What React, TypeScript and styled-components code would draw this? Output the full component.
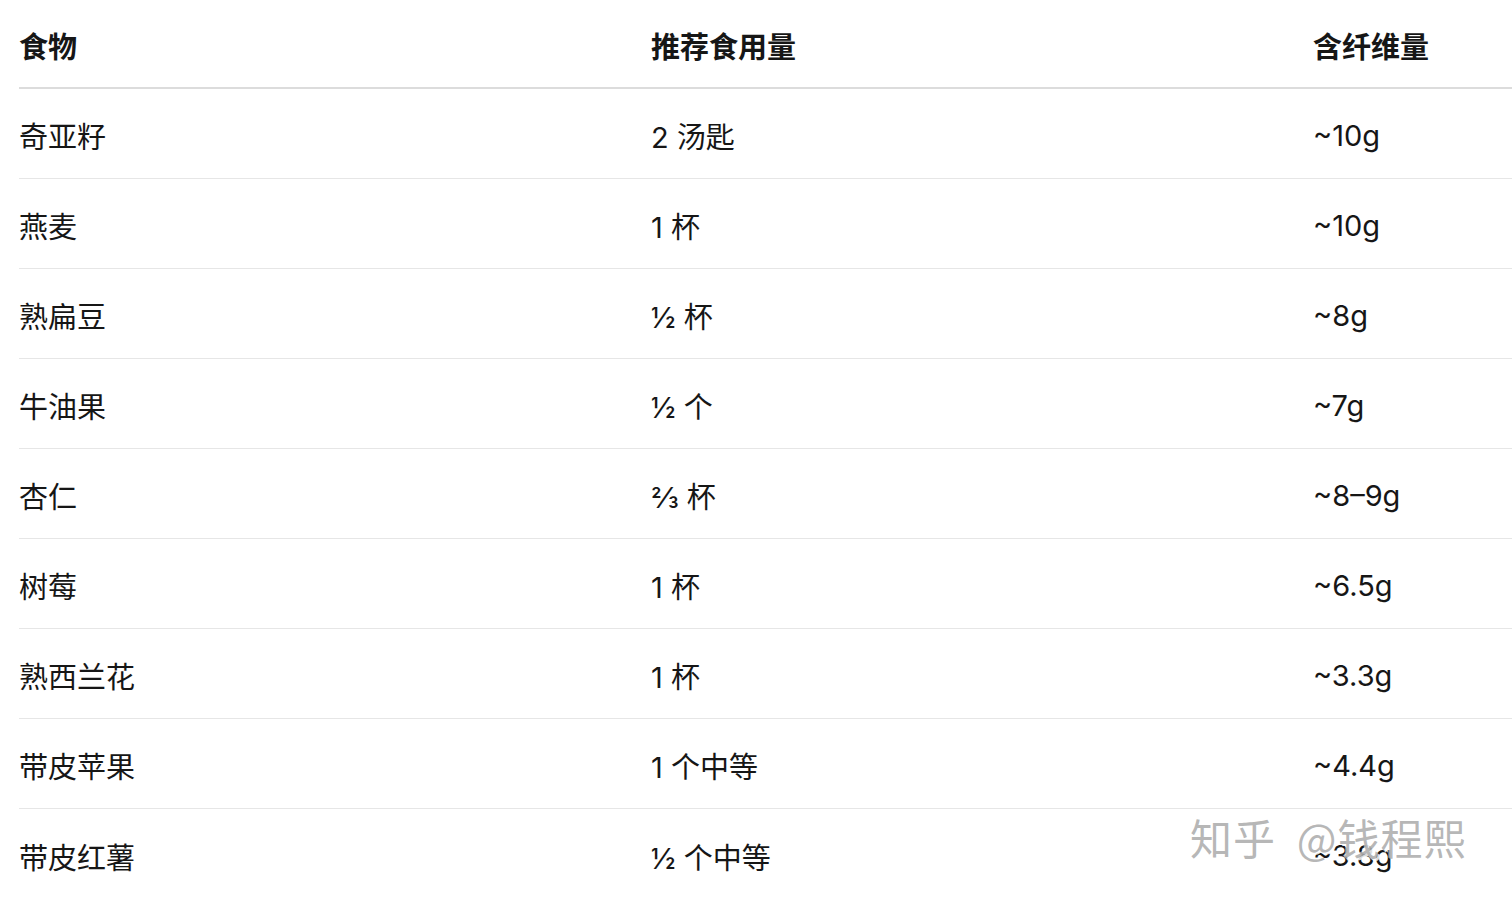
import React from "react";
import styled, { createGlobalStyle } from "styled-components";

const Global = createGlobalStyle`
  html, body { margin: 0; padding: 0; background: #ffffff; }
  body { overflow: hidden; }
`;

const Page = styled.div`
  position: relative;
  width: 1512px;
  height: 902px;
  overflow: hidden;
  background: #fff;
  font-family: Inter, "Noto Sans CJK SC", sans-serif;
  color: #161616;
`;

const Table = styled.div`
  margin-left: 19px;
  width: 1520px;
  display: flex;
  flex-direction: column;
`;

const Row = styled.div<{ $head?: boolean; $last?: boolean }>`
  display: grid;
  grid-template-columns: 632px 662px 1fr;
  align-items: center;
  height: ${(p) => (p.$head ? "89px" : "90px")};
  border-bottom: ${(p) =>
    p.$head ? "2px solid #dcdcdc" : p.$last ? "none" : "1px solid #e6e6e6"};
  font-size: 29px;
  font-weight: ${(p) => (p.$head ? 700 : 400)};
  padding-top: ${(p) => (p.$head ? "2px" : "3px")};
  box-sizing: border-box;
  flex-shrink: 0;
`;

const Cell = styled.div`
  white-space: nowrap;
`;

const Watermark = styled.div`
  position: absolute;
  left: 1190px;
  top: 806px;
  font-family: "Noto Sans CJK SC", sans-serif;
  font-size: 42px;
  color: rgba(170, 170, 170, 0.85);
  text-shadow: 2px 2px 0 rgba(255, 255, 255, 0.85), -1px -1px 0 rgba(255, 255, 255, 0.6);
  white-space: pre;
  letter-spacing: 1px;
`;

const rows: [string, string, string][] = [
  ["奇亚籽", "2 汤匙", "~10g"],
  ["燕麦", "1 杯", "~10g"],
  ["熟扁豆", "½ 杯", "~8g"],
  ["牛油果", "½ 个", "~7g"],
  ["杏仁", "⅔ 杯", "~8–9g"],
  ["树莓", "1 杯", "~6.5g"],
  ["熟西兰花", "1 杯", "~3.3g"],
  ["带皮苹果", "1 个中等", "~4.4g"],
  ["带皮红薯", "½ 个中等", "~3.8g"],
];

export default function App() {
  return (
    <Page>
      <Global />
      <Table>
        <Row $head>
          <Cell>食物</Cell>
          <Cell>推荐食用量</Cell>
          <Cell>含纤维量</Cell>
        </Row>
        {rows.map((r, i) => (
          <Row key={i} $last={i === rows.length - 1}>
            <Cell>{r[0]}</Cell>
            <Cell>{r[1]}</Cell>
            <Cell>{r[2]}</Cell>
          </Row>
        ))}
      </Table>
      <Watermark>{"知乎  @钱程熙"}</Watermark>
    </Page>
  );
}
